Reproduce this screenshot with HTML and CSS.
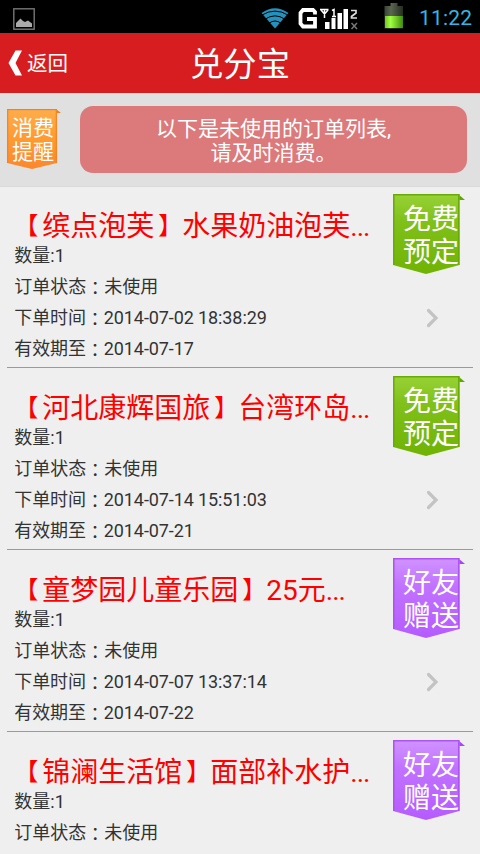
FILE: index.html
```html
<!DOCTYPE html>
<html lang="zh-CN">
<head>
<meta charset="utf-8">
<title>兑分宝</title>
<link rel="stylesheet" href="styles.css">
</head>
<body>
<svg class="defs" width="0" height="0">
  <defs>
    <linearGradient id="green" x1="0" y1="0" x2="0" y2="1"><stop offset="0" stop-color="#98d236"/><stop offset=".35" stop-color="#80c01a"/><stop offset="1" stop-color="#70b303"/></linearGradient>
    <linearGradient id="purple" x1="0" y1="0" x2="0" y2="1"><stop offset="0" stop-color="#d093ff"/><stop offset=".35" stop-color="#c172ff"/><stop offset="1" stop-color="#b55bff"/></linearGradient>
    <linearGradient id="orange" x1="0" y1="0" x2="0" y2="1"><stop offset="0" stop-color="#ffad4c"/><stop offset=".5" stop-color="#ff9a30"/><stop offset="1" stop-color="#fc872d"/></linearGradient>
    <linearGradient id="cell" x1="0" y1="0" x2="1" y2="0"><stop offset="0" stop-color="#70c91c"/><stop offset=".3" stop-color="#a0ff40"/><stop offset="1" stop-color="#3c8d0b"/></linearGradient>
    <linearGradient id="shell" x1="0" y1="0" x2="1" y2="0"><stop offset="0" stop-color="#3b4435"/><stop offset=".35" stop-color="#5b6651"/><stop offset="1" stop-color="#252d20"/></linearGradient>
  </defs>
</svg>
<div class="status">
  <svg class="picture" width="22" height="22" viewBox="0 0 22 22"><rect x=".8" y=".8" width="20.4" height="20.4" fill="none" stroke="#777" stroke-width="1.4"/><path d="M3 19v-4l3-3 1.500-1.500L10 13l2 1 3-1.500 4 3V19z" fill="#aaa"/></svg>
  <svg class="wifi" width="28" height="21" viewBox="0 0 28 21"><path d="M.5 5Q14-4.500 27.500 5L14 20.500z" fill="#2592be"/><path d="M1 7Q14-.8 27 7M4 11.200Q14 4.500 24 11.200M8 15.200Q14 10.800 20 15.200" fill="none" stroke="#000" stroke-width="1"/></svg>
  <svg class="signal" width="62" height="22" viewBox="0 0 62 22">
    <path d="M17 6.500V4L15 2H5L2.500 5v10.500L5 18.500h12V11H9" fill="none" stroke="#fff" stroke-width="3.800"/>
    <path d="M22 1.500h8.500M23 2l3.500 4L30 2M26.500 1v9M34 2.500l2-1v7M34 8.500h4" fill="none" stroke="#fff" stroke-width="1.500"/>
    <path d="M27 14h4.500v7H27zM33.500 10h4v11h-4zM39.500 5H44v16h-4.500zM45.500 1H50v20h-4.500z" fill="#fff"/>
    <path d="M53 2.500h5V5l-4.500 3.500V10H59" fill="none" stroke="#ddd" stroke-width="1.700"/>
    <path d="M53.500 15l5.500 6m0-6l-5.500 6" stroke="#777" stroke-width="1.500"/>
  </svg>
  <svg class="battery" width="20" height="26" viewBox="0 0 20 26"><path d="M6.500 0h7v3H19v22.500H.5V3h6z" fill="url(#shell)"/><path d="M1 13h18v12H1z" fill="url(#cell)"/></svg>
  <span class="clock">11:22</span>
</div>
<header class="header">
  <a class="back"><svg width="15" height="26" viewBox="0 0 15 26"><path d="M7.500.5H14L7.500 13 14 25.500H7.500L.5 13z" fill="#fff"/></svg><span>返回</span></a>
  <h1>兑分宝</h1>
</header>
<section class="notice">
  <div class="tag"><svg width="55" height="61" viewBox="0 0 55 61"><path d="M49 0l5 4h-5z" fill="#ef7f22"/><path d="M0 0h50v54L25 60 0 54z" fill="url(#orange)"/><path d="M.7 54V.7h48.600V54" fill="none" stroke="#f58220" stroke-width="1.200"/></svg><span>消费<br>提醒</span></div>
  <p>以下是未使用的订单列表,<br>请及时消费。</p>
</section>
<main class="orders">
  <article class="order">
    <div class="info"><h2><span class="open">【</span>缤点泡芙<span class="close">】</span>水果奶油泡芙<i>...</i></h2>
      <p>数量:1</p><p>订单状态<b lang="zh-TW">：</b>未使用</p><p>下单时间<b lang="zh-TW">：</b>2014-07-02 18:38:29</p><p>有效期至<b lang="zh-TW">：</b>2014-07-17</p></div>
    <div class="side">
      <div class="ribbon"><svg width="73" height="80" viewBox="0 0 73 80"><path d="M65 0l7 6h-7z" fill="#62a505"/><path d="M0 0h66.500v71L33 80 0 71z" fill="url(#green)"/><path d="M.8 71V.8h65V71" fill="none" stroke="#68ab06" stroke-width="1.500"/></svg><span>免费<br>预定</span></div>
      <svg class="arrow" width="14" height="20" viewBox="0 0 14 20"><path d="M2.500 2.500L10 10l-7.500 7.500" fill="none" stroke="#c3c3c3" stroke-width="3.200" stroke-linecap="round"/></svg>
    </div>
  </article>
  <article class="order">
    <div class="info"><h2><span class="open">【</span>河北康辉国旅<span class="close">】</span>台湾环岛<i>...</i></h2>
      <p>数量:1</p><p>订单状态<b lang="zh-TW">：</b>未使用</p><p>下单时间<b lang="zh-TW">：</b>2014-07-14 15:51:03</p><p>有效期至<b lang="zh-TW">：</b>2014-07-21</p></div>
    <div class="side">
      <div class="ribbon"><svg width="73" height="80" viewBox="0 0 73 80"><path d="M65 0l7 6h-7z" fill="#62a505"/><path d="M0 0h66.500v71L33 80 0 71z" fill="url(#green)"/><path d="M.8 71V.8h65V71" fill="none" stroke="#68ab06" stroke-width="1.500"/></svg><span>免费<br>预定</span></div>
      <svg class="arrow" width="14" height="20" viewBox="0 0 14 20"><path d="M2.500 2.500L10 10l-7.500 7.500" fill="none" stroke="#c3c3c3" stroke-width="3.200" stroke-linecap="round"/></svg>
    </div>
  </article>
  <article class="order">
    <div class="info"><h2><span class="open">【</span>童梦园儿童乐园<span class="close">】</span>25元<i>...</i></h2>
      <p>数量:1</p><p>订单状态<b lang="zh-TW">：</b>未使用</p><p>下单时间<b lang="zh-TW">：</b>2014-07-07 13:37:14</p><p>有效期至<b lang="zh-TW">：</b>2014-07-22</p></div>
    <div class="side">
      <div class="ribbon"><svg width="73" height="80" viewBox="0 0 73 80"><path d="M65 0l7 6h-7z" fill="#a24af0"/><path d="M0 0h66.500v71L33 80 0 71z" fill="url(#purple)"/><path d="M.8 71V.8h65V71" fill="none" stroke="#ad52f5" stroke-width="1.500"/></svg><span>好友<br>赠送</span></div>
      <svg class="arrow" width="14" height="20" viewBox="0 0 14 20"><path d="M2.500 2.500L10 10l-7.500 7.500" fill="none" stroke="#c3c3c3" stroke-width="3.200" stroke-linecap="round"/></svg>
    </div>
  </article>
  <article class="order">
    <div class="info"><h2><span class="open">【</span>锦澜生活馆<span class="close">】</span>面部补水护<i>...</i></h2>
      <p>数量:1</p><p>订单状态<b lang="zh-TW">：</b>未使用</p></div>
    <div class="side">
      <div class="ribbon"><svg width="73" height="80" viewBox="0 0 73 80"><path d="M65 0l7 6h-7z" fill="#a24af0"/><path d="M0 0h66.500v71L33 80 0 71z" fill="url(#purple)"/><path d="M.8 71V.8h65V71" fill="none" stroke="#ad52f5" stroke-width="1.500"/></svg><span>好友<br>赠送</span></div>
    </div>
  </article>
</main>
</body>
</html>
```
FILE: styles.css
```css
* { box-sizing: border-box; margin: 0; padding: 0; }
body { width: 480px; height: 854px; overflow: hidden; background: #efefef; font-family: Roboto, "Noto Sans CJK SC", sans-serif; display: flex; flex-direction: column; }
svg { display: block; flex: none; }
.defs { position: absolute; }
.status { flex: none; height: 33px; background: #000; display: flex; align-items: flex-start; padding-left: 13px; overflow: hidden; }
.picture { margin-top: 8px; }
.wifi { margin: 8px 0 0 226px; }
.signal { margin: 8px 0 0 9px; }
.battery { margin: 3px 0 0 24px; }
.clock { margin-left: 15px; font-size: 21px; line-height: 36px; color: #33b5e5; letter-spacing: 0.2px; white-space: nowrap; }
.header { flex: none; height: 60px; background: #d71d20; color: #fff; display: grid; grid-template-columns: 1fr auto 1fr; align-items: center; }
.back { display: flex; align-items: center; gap: 4px; padding-left: 8px; font-size: 20.500px; line-height: 60px; }
.back svg { margin-top: -2px; }
.back span { padding-top: 1px; }
.header h1 { font-size: 33.300px; font-weight: 400; line-height: 56px; padding-top: 3px; }
.notice { flex: none; height: 94px; background: #e0e0e0; display: flex; align-items: flex-start; padding: 13px 13px 0 7px; border-bottom: 1px solid #dadada; }
.tag { width: 55px; height: 61px; margin: 3px 18px 0 0; position: relative; }
.tag span { position: absolute; left: 5px; top: 7px; color: #fff; font-size: 21px; line-height: 24px; white-space: nowrap; }
.notice p { flex: 1; height: 67px; padding-top: 11px; border-radius: 13px; background: #dc7a7b; color: #fff; text-align: center; font-size: 21px; line-height: 24px; }
.orders { flex: none; height: 667px; }
.order { height: 182px; margin: 0 7px; padding: 0 0 0 7px; border-bottom: 1px solid #9d9999; display: flex; justify-content: space-between; }
.order:first-child { height: 181px; }
.order:last-child { height: 122px; border-bottom: 0; }
.order:first-child .info { padding-top: 19px; }
.order:first-child .ribbon { margin-top: 7px; }
.info { padding: 20px 0 0 0.3px; white-space: nowrap; }
.info h2 { color: #f00; font-size: 28px; font-weight: 400; line-height: 38px; height: 34px; padding-top: 2px; }
.info h2 i { font-style: normal; letter-spacing: -1px; }
.open, .close { font-size: 24px; line-height: 0; vertical-align: 2px; }
.open { margin-right: 4px; }
.close { margin-left: 4px; }
.info p { color: #333; font-size: 18px; line-height: 31px; height: 31px; }
.info p:nth-child(n+4) { letter-spacing: -0.1px; }
.info b { font-family: "Noto Sans CJK TC", sans-serif; font-weight: 400; line-height: 0; vertical-align: -1.5px; }
.side { width: 80px; }
.ribbon { position: relative; width: 73px; height: 80px; margin-top: 8px; }
.ribbon span { position: absolute; left: 10px; top: 9px; color: #fff; font-size: 28px; line-height: 33px; white-space: nowrap; }
.arrow { margin: 34px 0 0 33px; }
```
